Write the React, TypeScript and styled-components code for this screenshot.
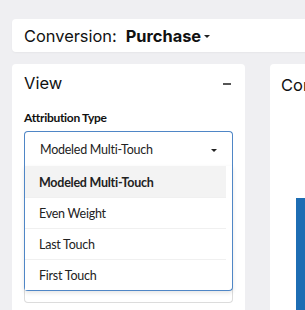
import React from 'react';
import styled, { createGlobalStyle } from 'styled-components';

const GlobalStyle = createGlobalStyle`
  html, body {
    margin: 0;
    padding: 0;
    background: #efeff2;
    overflow: hidden;
  }
  * {
    box-sizing: border-box;
  }
`;

const options = ['Modeled Multi-Touch', 'Even Weight', 'Last Touch', 'First Touch'];

const App = () => {
  return (
    <>
      <GlobalStyle />
      <Page>
        <TopBar>
          <ConvLabel>Conversion:</ConvLabel>
          <ConvValue>Purchase</ConvValue>
          <Caret $size={3} />
        </TopBar>
        <Columns>
          <ViewPanel>
            <PanelHeader>
              <PanelTitle>View</PanelTitle>
              <Minus />
            </PanelHeader>
            <FieldLabel>Attribution Type</FieldLabel>
            <SelectWrap>
              <SelectBox>
                <span>Modeled Multi-Touch</span>
                <Caret $size={3.5} />
              </SelectBox>
              <Menu>
                {options.map((opt, i) => (
                  <MenuItem key={opt} $active={i === 0}>
                    {opt}
                  </MenuItem>
                ))}
              </Menu>
              <HiddenField />
            </SelectWrap>
          </ViewPanel>
          <ChartPanel>
            <PanelTitle>Conversions</PanelTitle>
            <Bar />
          </ChartPanel>
        </Columns>
      </Page>
    </>
  );
};

export default App;

const Page = styled.div`
  width: 305px;
  height: 310px;
  padding: 19px 0 0 12px;
  overflow: hidden;
`;

const TopBar = styled.div`
  display: flex;
  align-items: center;
  width: 320px;
  height: 33px;
  padding-left: 12px;
  background: #fff;
  border-radius: 4px;
  box-shadow: 0 1px 2px rgba(0, 0, 0, 0.04);
  font-family: Inter, 'Open Sans', sans-serif;
  color: #111;
`;

const ConvLabel = styled.span`
  font-size: 16.4px;
  font-weight: 400;
  margin-right: 9px;
`;

const ConvValue = styled.span`
  font-size: 16.4px;
  font-weight: 700;
  margin-right: 3px;
`;

const Caret = styled.span<{ $size: number }>`
  display: inline-block;
  width: 0;
  height: 0;
  border-left: ${(p) => p.$size}px solid transparent;
  border-right: ${(p) => p.$size}px solid transparent;
  border-top: ${(p) => p.$size}px solid #222;
  margin-top: 2px;
`;

const Columns = styled.div`
  display: flex;
  gap: 25px;
  margin-top: 12px;
`;

const ViewPanel = styled.div`
  flex: 0 0 233px;
  height: 260px;
  padding: 0 12px;
  background: #fff;
  border-radius: 4px;
`;

const PanelHeader = styled.div`
  display: flex;
  align-items: center;
  justify-content: space-between;
  height: 37px;
  padding-right: 2px;
`;

const PanelTitle = styled.div`
  font-family: Inter, 'Open Sans', sans-serif;
  font-size: 16.5px;
  color: #111;
`;

const Minus = styled.span`
  display: block;
  width: 8px;
  height: 2px;
  margin-top: 2px;
  background: #555;
`;

const FieldLabel = styled.div`
  margin-top: 10px;
  font-family: Lato, sans-serif;
  font-weight: 700;
  font-size: 12px;
  line-height: 14px;
  letter-spacing: -0.3px;
  color: #111;
`;

const SelectWrap = styled.div`
  position: relative;
  margin-top: 6px;
`;

const SelectBox = styled.div`
  display: flex;
  align-items: center;
  justify-content: space-between;
  height: 36px;
  padding: 0 15px 0 15px;
  border: 1px solid #4f86c6;
  border-bottom: none;
  border-radius: 4px 4px 0 0;
  background: #fff;
  font-family: Lato, sans-serif;
  font-size: 12.5px;
  letter-spacing: -0.25px;
  color: #222;
`;

const Menu = styled.div`
  position: absolute;
  left: 0;
  right: 0;
  top: 35px;
  z-index: 2;
  padding-right: 6px;
  background: #fff;
  border: 1px solid #4f86c6;
  border-top: none;
  border-radius: 0 0 4px 4px;
  box-shadow: 0 2px 4px rgba(0, 0, 0, 0.1);
`;

const MenuItem = styled.div<{ $active: boolean }>`
  height: 31px;
  display: flex;
  align-items: center;
  padding-left: 14px;
  font-family: Lato, sans-serif;
  font-size: 12.5px;
  letter-spacing: -0.25px;
  font-weight: ${(p) => (p.$active ? 700 : 400)};
  color: #222;
  background: ${(p) => (p.$active ? '#f3f3f3' : '#fff')};
  border-top: 1px solid ${(p) => (p.$active ? 'transparent' : '#f0f0f0')};
`;

const HiddenField = styled.div`
  height: 136px;
  border: 1px solid #dcdcdc;
  border-top: none;
  border-radius: 0 0 4px 4px;
`;

const ChartPanel = styled.div`
  position: relative;
  flex: 1 0 60px;
  height: 260px;
  padding: 11px 11px;
  background: #fff;
  border-radius: 4px;
  overflow: hidden;
`;

const Bar = styled.div`
  position: absolute;
  left: 26px;
  top: 134px;
  width: 40px;
  height: 140px;
  background: #1d6db3;
`;
